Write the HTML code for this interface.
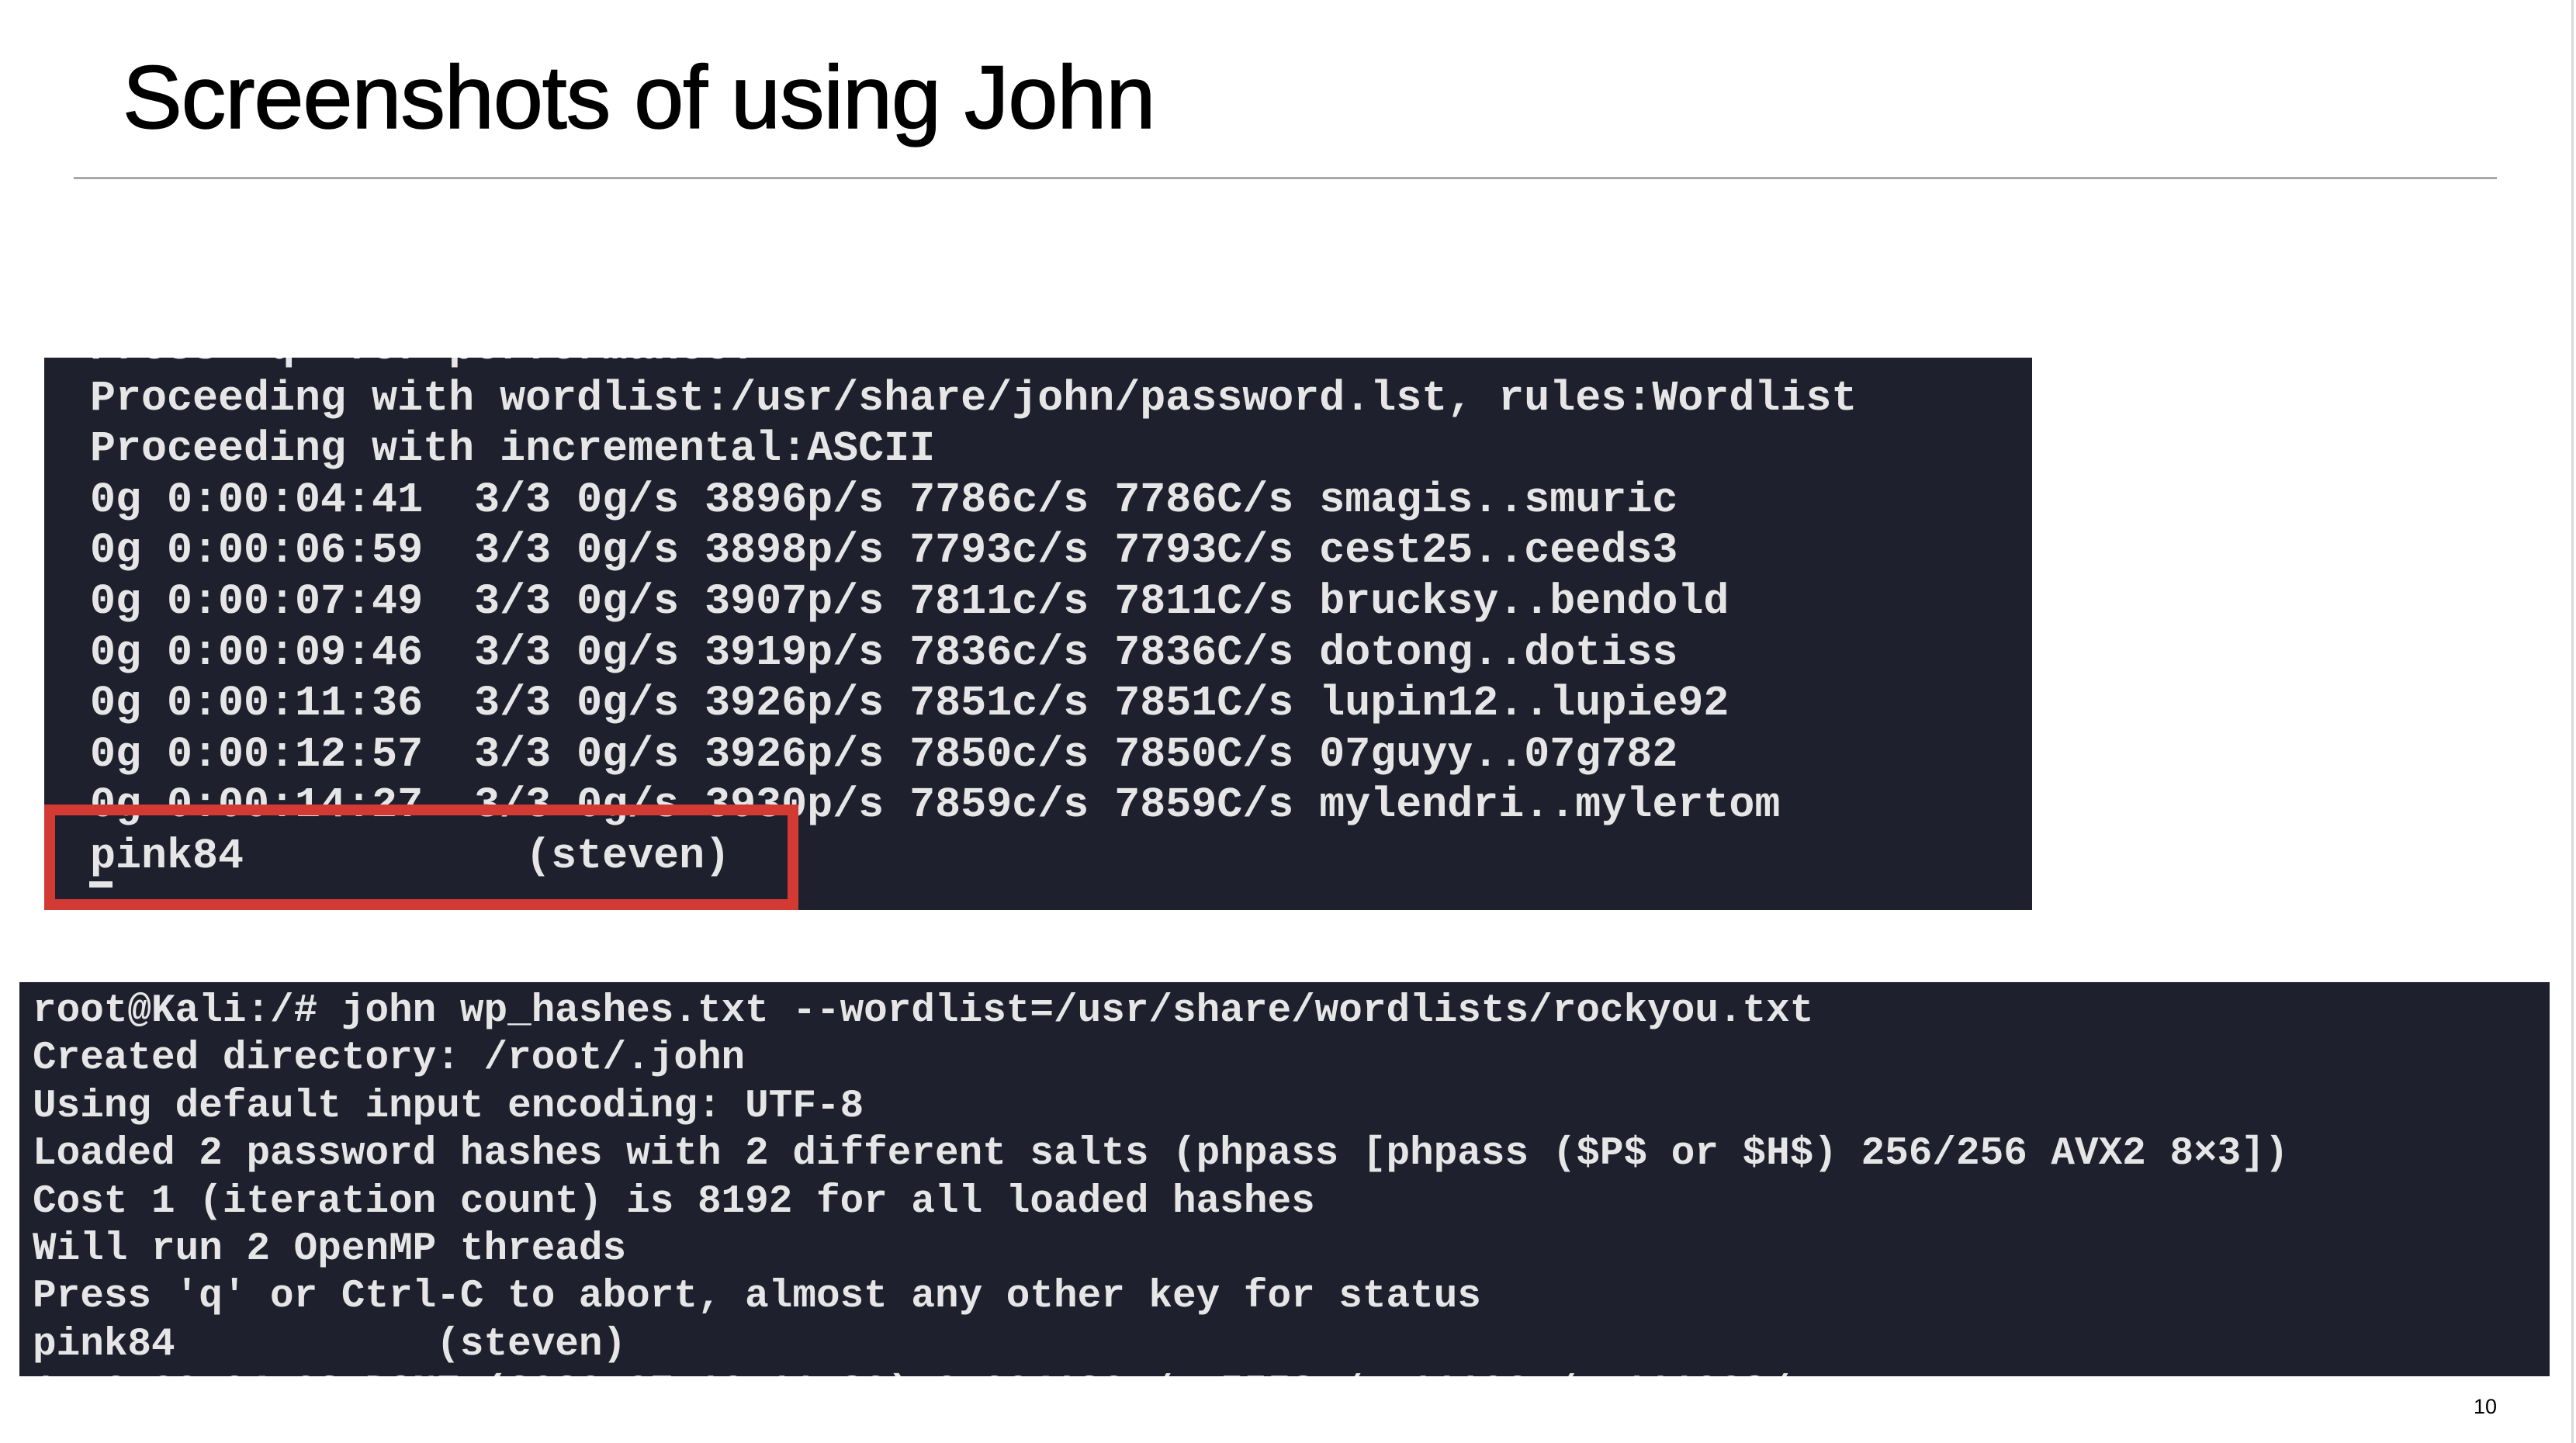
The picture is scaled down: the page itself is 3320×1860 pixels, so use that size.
<!DOCTYPE html>
<html><head><meta charset="utf-8"><style>
html,body{margin:0;padding:0;background:#fff;}
body{width:3320px;height:1860px;position:relative;overflow:hidden;font-family:"Liberation Sans",sans-serif;}
.title{position:absolute;left:158px;top:60px;font-size:115px;color:#000;letter-spacing:-1px;font-weight:500;-webkit-text-stroke:1.5px #000;}
.rule{position:absolute;left:95px;top:228px;width:3123px;height:3px;background:#a8a8a8;}
.edge{position:absolute;left:3314px;top:0;width:3px;height:1860px;background:#d8d8d8;}
.term{position:absolute;background:#1e202d;overflow:hidden;}
.term pre{margin:0;font-family:"Liberation Mono",monospace;color:#e6e6e6;white-space:pre;font-weight:bold;}
#t1{left:57px;top:461px;width:2562px;height:712px;}
#t1 pre{position:absolute;left:59px;top:-46px;font-size:55px;line-height:65.6px;}
#t2{left:25px;top:1266px;width:3261px;height:508px;}
#t2 pre{position:absolute;left:17px;top:7px;font-size:51px;line-height:61.4px;}
.red{position:absolute;left:57px;top:1037px;width:972px;height:136px;box-sizing:border-box;border:14px solid #d33a33;}
.num{position:absolute;left:3188px;top:1798px;font-size:27px;color:#000;}
.cursor{position:absolute;left:115px;top:1136px;width:30px;height:8px;background:#e6e6e6;}
</style></head><body>
<div class="title">Screenshots of using John</div>
<div class="rule"></div>
<div class="edge"></div>
<div class="term" id="t1"><pre>Press 'q' for performance.
Proceeding with wordlist:/usr/share/john/password.lst, rules:Wordlist
Proceeding with incremental:ASCII
0g 0:00:04:41  3/3 0g/s 3896p/s 7786c/s 7786C/s smagis..smuric
0g 0:00:06:59  3/3 0g/s 3898p/s 7793c/s 7793C/s cest25..ceeds3
0g 0:00:07:49  3/3 0g/s 3907p/s 7811c/s 7811C/s brucksy..bendold
0g 0:00:09:46  3/3 0g/s 3919p/s 7836c/s 7836C/s dotong..dotiss
0g 0:00:11:36  3/3 0g/s 3926p/s 7851c/s 7851C/s lupin12..lupie92
0g 0:00:12:57  3/3 0g/s 3926p/s 7850c/s 7850C/s 07guyy..07g782
0g 0:00:14:27  3/3 0g/s 3930p/s 7859c/s 7859C/s mylendri..mylertom
pink84           (steven)</pre></div>
<div class="red"></div>
<div class="cursor"></div>
<div class="term" id="t2"><pre>root@Kali:/# john wp_hashes.txt --wordlist=/usr/share/wordlists/rockyou.txt
Created directory: /root/.john
Using default input encoding: UTF-8
Loaded 2 password hashes with 2 different salts (phpass [phpass ($P$ or $H$) 256/256 AVX2 8×3])
Cost 1 (iteration count) is 8192 for all loaded hashes
Will run 2 OpenMP threads
Press 'q' or Ctrl-C to abort, almost any other key for status
pink84           (steven)
1g 0:00:04:02 DONE (2020-07-10 11:20) 0.004126g/s 5553p/s 11106c/s 11106C/s</pre></div>
<div class="num">10</div>
</body></html>
